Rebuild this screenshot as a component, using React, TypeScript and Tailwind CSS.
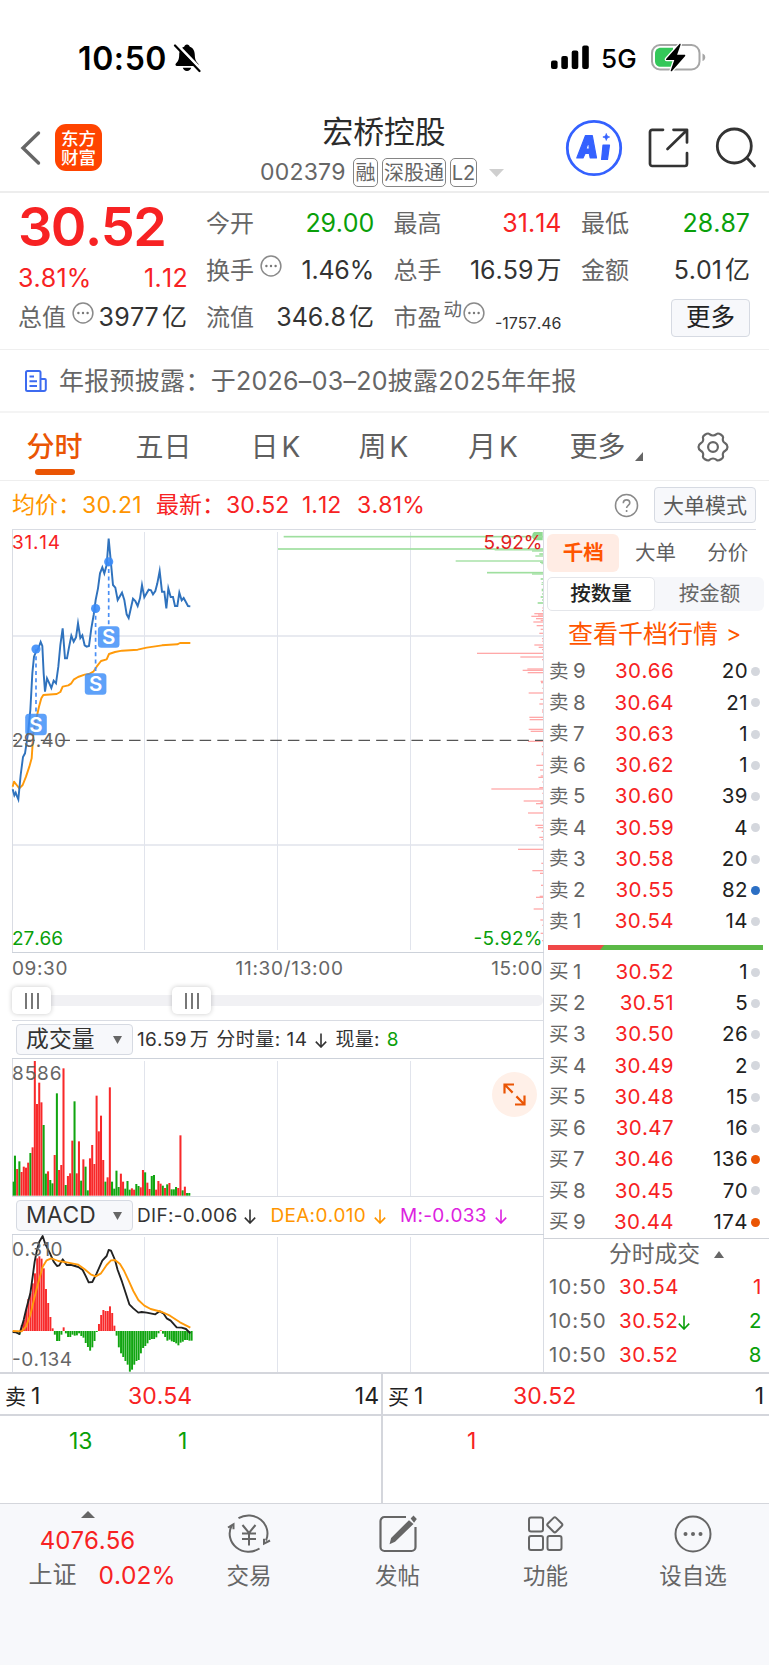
import React from 'react';

type Bar = [number, 'r' | 'g'];

const RED = '#f72223';
const GREEN = '#0a9f0a';

const priceLine =
  '38,808 43,826 47,818 50,826 55,838 62,765 69,711 75,700 84,640 91,570 97,460 102,410 108,395 115,385 122,366 127,378 131,460 135,515 141,475 147,488 154,504 161,482 168,490 175,440 181,375 188,325 195,415 201,415 207,382 214,347 221,365 228,352 234,310 241,354 247,346 254,376 260,380 267,378 274,325 281,285 287,240 294,205 300,160 307,142 313,160 320,135 326,56 333,130 339,195 346,203 353,240 366,218 373,240 380,283 386,294 399,236 406,243 413,258 420,235 426,195 433,232 446,209 453,211 459,223 466,213 472,190 479,153 486,215 493,215 499,265 505,205 512,231 519,231 525,258 532,258 538,218 545,241 551,234 558,247 564,258 571,259';
const avgLine =
  '38,800 42,785 50,795 58,805 68,795 78,770 88,740 95,715 100,640 108,600 117,560 124,535 130,525 170,522 181,516 188,500 205,496 214,490 221,479 234,471 254,464 267,462 280,455 290,440 303,423 320,418 327,402 345,396 366,392 413,389 440,383 486,376 532,373 540,369 571,369';
const difLine =
  '38,426 48,427 58,432 65,410 71,390 78,360 91,310 98,260 104,215 111,180 118,155 128,138 135,160 150,190 161,215 171,228 178,226 188,208 200,225 215,225 235,231 248,240 258,260 266,277 277,276 290,250 307,212 320,198 326,180 333,182 345,210 353,240 366,275 378,312 388,343 400,355 415,368 425,366 440,368 466,373 479,364 490,370 500,385 512,392 530,412 545,413 558,417 571,430';
const deaLine =
  '38,423 65,424 78,410 91,375 104,320 117,270 128,230 140,211 154,205 175,213 200,217 235,224 254,238 272,253 287,259 303,250 320,225 333,211 345,210 360,222 373,244 386,272 400,303 415,330 433,347 452,357 486,366 510,377 540,397 571,413';

const volume: Bar[] = [
  [755, 'g'], [677, 'g'], [717, 'r'], [694, 'g'], [726, 'r'], [710, 'r'], [713, 'r'], [698, 'r'], [669, 'g'], [652, 'r'],
  [393, 'r'], [522, 'r'], [458, 'r'], [517, 'r'], [585, 'g'], [731, 'g'], [724, 'r'], [750, 'g'], [760, 'g'], [675, 'r'],
  [490, 'g'], [720, 'r'], [705, 'r'], [415, 'r'], [765, 'g'], [738, 'r'], [730, 'r'], [632, 'r'], [514, 'g'], [730, 'r'],
  [634, 'r'], [752, 'g'], [688, 'r'], [710, 'g'], [781, 'g'], [685, 'r'], [645, 'r'], [702, 'r'], [497, 'r'], [604, 'r'],
  [557, 'r'], [690, 'r'], [755, 'g'], [742, 'r'], [472, 'r'], [755, 'g'], [776, 'g'], [722, 'g'], [771, 'g'], [731, 'r'],
  [755, 'r'], [776, 'g'], [753, 'g'], [779, 'g'], [775, 'r'], [779, 'r'], [762, 'g'], [768, 'g'], [772, 'r'], [720, 'r'],
  [727, 'g'], [758, 'r'], [777, 'r'], [738, 'g'], [735, 'g'], [779, 'r'], [753, 'r'], [761, 'r'], [767, 'g'], [774, 'r'],
  [763, 'g'], [759, 'r'], [778, 'g'], [778, 'g'], [771, 'g'], [774, 'r'], [616, 'r'], [781, 'g'], [770, 'r'], [789, 'g'],
  [789, 'g'],
];

const macd = [
  423, 423, 427, 434, 405, 390, 360, 327, 310, 280, 250, 205, 199, 206, 235, 297, 339, 381, 415, 434, 453, 453, 434, 412, 430, 441, 441,
  434, 437, 436, 430, 438, 443, 459, 471, 482, 472, 453, 426, 402, 375, 360, 363, 363, 349, 369, 407, 437, 472, 490, 501, 513, 524, 545,
  539, 524, 513, 510, 490, 474, 468, 460, 450, 447, 447, 442, 430, 421, 431, 441, 452, 449, 454, 456, 460, 466, 458, 455, 450, 450, 452,
  452,
];

const askDepth: [number, number, number][] = [
  [50, 71, 5], [87, 54, 5], [90, 704, 3], [93, 816, 4], [101, 838, 3], [104, 838, 3], [108, 826, 4], [123, 587, 4], [127, 840, 4],
  [131, 844, 3], [158, 681, 5], [162, 816, 4], [177, 842, 5], [188, 845, 3], [193, 844, 3], [210, 845, 8], [222, 846, 4], [231, 842, 5],
  [240, 846, 4], [249, 833, 5],
];
const bidDepth: [number, number][] = [
  [264, 847], [272, 846], [281, 823], [285, 834], [289, 814], [296, 828], [301, 842], [306, 820], [317, 830], [328, 842], [340, 838],
  [356, 846], [364, 847], [375, 823], [382, 836], [389, 846], [400, 651], [411, 781], [419, 846], [447, 802], [451, 788], [458, 803],
  [484, 842], [488, 843], [505, 847], [519, 806], [538, 841], [552, 838], [570, 846], [576, 846], [592, 808], [599, 809], [628, 806],
  [634, 812], [664, 804], [680, 846], [699, 845], [704, 845], [736, 829], [750, 840], [768, 842], [772, 835], [786, 847], [803, 838],
  [807, 694], [820, 847], [843, 791], [847, 842], [851, 828], [862, 840], [879, 804], [900, 847], [916, 826], [923, 833], [934, 845],
  [952, 838], [959, 844], [988, 774], [1030, 844], [1052, 817], [1060, 840], [1096, 843], [1129, 839], [1132, 828], [1150, 847],
  [1167, 821], [1200, 841], [1216, 847], [1240, 842], [1262, 846],
];

const asks: [string, string, string][] = [
  ['9', '30.66', '20'], ['8', '30.64', '21'], ['7', '30.63', '1'], ['6', '30.62', '1'], ['5', '30.60', '39'], ['4', '30.59', '4'],
  ['3', '30.58', '20'], ['2', '30.55', '82'], ['1', '30.54', '14'],
];
const bids: [string, string, string][] = [
  ['1', '30.52', '1'], ['2', '30.51', '5'], ['3', '30.50', '26'], ['4', '30.49', '2'], ['5', '30.48', '15'], ['6', '30.47', '16'],
  ['7', '30.46', '136'], ['8', '30.45', '70'], ['9', '30.44', '174'],
];

function MoreDots({ className = '' }: { className?: string }) {
  return (
    <svg className={`h-[22px] w-[22px] shrink-0 ${className}`} viewBox="0 0 22 22" fill="none">
      <circle cx="11" cy="11" r="9.9" stroke="#8a8a8a" strokeWidth="1.5" />
      <g fill="#777">
        <circle cx="6.4" cy="11" r="1.2" />
        <circle cx="11" cy="11" r="1.2" />
        <circle cx="15.6" cy="11" r="1.2" />
      </g>
    </svg>
  );
}

function StatusBar() {
  return (
    <div className="flex h-[100px] items-start text-black">
      <span className="mt-[43px] ml-[78px] w-[95px] text-[32px] leading-8 font-semibold tracking-[0.600px]">10:50</span>
      <svg className="mt-[43px] h-[30px] w-[28px]" viewBox="0 0 28 30">
        <path
          d="M14 1.5c-1.5 0-2.6 1-2.8 2.3C7.600 5 6.300 8.200 6.200 12c-.1 4.600-1.400 6.500-3.300 8.600-.9 1-.4 2.400 1 2.400h20.200c1.400 0 1.900-1.400 1-2.400-1.900-2.100-3.200-4-3.300-8.600-.1-3.800-1.400-7-5-8.200C16.600 2.500 15.500 1.500 14 1.500zM9.800 24.800h8.400c-.5 1.900-2.100 3.200-4.200 3.200s-3.700-1.300-4.200-3.200z"
          fill="#000"
        />
        <path d="M4 1.500 28 26.500" stroke="#fff" strokeWidth="3" />
        <path d="M2 2.500 26.500 28" stroke="#000" strokeWidth="2.200" strokeLinecap="round" />
      </svg>
      <svg className="mt-[45px] ml-[350px] h-[25px] w-[39px]" viewBox="0 0 39 25">
        <rect x="0" y="15.500" width="6.600" height="8.500" rx="2" />
        <rect x="10.300" y="11" width="6.600" height="13" rx="2" />
        <rect x="20.700" y="5.500" width="6.600" height="18.500" rx="2" />
        <rect x="31.200" y="0.500" width="6.600" height="23.500" rx="2" />
      </svg>
      <span className="mt-[44px] ml-[11px] w-[50px] text-[26px] leading-[30px] font-medium tracking-[0.2px]">5G</span>
      <svg className="mt-[43px] h-[29px] w-[56px]" viewBox="0 0 56 29">
        <rect x="1" y="2" width="47.500" height="24.500" rx="8" fill="none" stroke="#a6a6a6" strokeWidth="2" />
        <path d="M51.500 10.500c2 .7 2.700 2 2.700 3.700s-.7 3.100-2.700 3.800z" fill="#a6a6a6" />
        <path d="M10 4.800h12v19H10c-3.700 0-6-2.200-6-5.800v-7.400c0-3.600 2.300-5.800 6-5.800z" fill="#34c759" />
        <path
          d="M28.500 1 15.300 15.700c-.6.700-.3 1.300.5 1.300h7.500l-3.500 10.200c-.4 1 .5 1.400 1.200.7L34 13.200c.6-.7.300-1.400-.6-1.400h-7.300L29.600 1.700c.3-.9-.5-1.400-1.100-.7z"
          fill="#000" stroke="#fff" strokeWidth="2.600" paintOrder="stroke"
        />
      </svg>
    </div>
  );
}

function Tag({ children, className }: { children: React.ReactNode; className: string }) {
  return (
    <span className={`flex h-[29px] shrink-0 items-center justify-center rounded-[5px] border-[1.5px] border-[#858585] text-[20px] leading-none text-[#666] ${className}`}>
      {children}
    </span>
  );
}

function Header() {
  return (
    <div className="flex h-[93px] items-start border-b-2 border-[#ededed]">
      <svg className="mt-[30px] ml-[19px] h-[36px] w-[24px]" viewBox="0 0 24 36" fill="none">
        <path d="M19.500 3 4 18l15.500 15" stroke="#666" strokeWidth="3.400" strokeLinecap="round" />
      </svg>
      <div className="mt-[24px] ml-[12px] flex h-[47px] w-[47px] flex-col items-center justify-center rounded-[11px] bg-[#ff4400] text-[17.500px] leading-[19px] font-medium text-white">
        <span>东方</span>
        <span>财富</span>
      </div>
      <div className="ml-[158px] w-[248px]">
        <div className="mt-[16px] h-[36px] text-center text-[30.800px] leading-8 text-[#2b2b2b]">宏桥控股</div>
        <div className="mt-[6px] flex h-[29px] items-center">
          <span className="w-[93px] text-[23px] leading-none tracking-[0.200px] text-[#666]">002379</span>
          <Tag className="w-[25px]">融</Tag>
          <Tag className="ml-1 w-[64px]">深股通</Tag>
          <Tag className="ml-1 w-[27px]">L2</Tag>
          <svg className="ml-3 h-2 w-[15px] shrink-0" viewBox="0 0 15 8"><path d="M0 0h15L7.500 8z" fill="#cfcfcf" /></svg>
        </div>
      </div>
      <svg className="mt-[19px] ml-[57px] h-[58px] w-[58px]" viewBox="0 0 58 58">
        <circle cx="29" cy="29" r="26.700" fill="none" stroke="#3461ff" strokeWidth="2.800" />
        <g fill="#3461ff" stroke="#3461ff" strokeWidth="1.200" strokeLinejoin="round">
          <path fillRule="evenodd" d="M20.500 16.500h6.800l4.200 22.400h-6.300l-.9-4.400h-4.200l-2.100 4.400h-6.200zM23.600 22.500l-2.700 7.600h3.500z" />
          <path d="M38 26h6.500l-2 14.500h-5.900z" />
          <path d="M41.300 14.500c.5 2.300 1.100 2.900 3.300 3.500-2.200.6-2.800 1.200-3.300 3.400-.6-2.200-1.200-2.800-3.400-3.400 2.200-.6 2.800-1.200 3.400-3.500z" strokeWidth="0.800" />
        </g>
      </svg>
      <svg className="mt-[27px] ml-[24px] h-[42px] w-[44px]" viewBox="0 0 44 42" fill="none" stroke="#333" strokeWidth="2.700" strokeLinecap="round" strokeLinejoin="round">
        <path d="M16 2.800H5.200A2.200 2.200 0 0 0 3 5v31.800A2.200 2.200 0 0 0 5.200 39h32.600a2.200 2.200 0 0 0 2.200-2.200V26M26.500 2.800H40V15.500M39.500 3.500 20.500 22" />
      </svg>
      <svg className="mt-[26px] ml-[23px] h-[43px] w-[43px]" viewBox="0 0 43 43" fill="none" stroke="#333" strokeWidth="2.800" strokeLinecap="round">
        <circle cx="20.300" cy="20" r="17" />
        <path d="m33 32 7.500 8" />
      </svg>
    </div>
  );
}

function Quote() {
  const label = 'text-[24px] leading-none text-[#666] shrink-0';
  const value = 'text-[25px] leading-none ml-auto whitespace-nowrap';
  const cell = 'flex items-center h-[47px]';
  return (
    <div className="flex h-[157px] border-b border-[#efefef] pl-[18px]">
      <div className="mt-[6px] w-[169px] text-[#f72223]">
        <div className="h-[56px] text-[54px] leading-[56px] font-semibold tracking-[-1.500px]">30.52</div>
        <div className="mt-[8px] flex h-[30px] items-center justify-between text-[25px] leading-none tracking-[0.100px]">
          <span>3.81%</span>
          <span className="mr-[-1px] tracking-[0.300px]">1.12</span>
        </div>
        <div className="mt-[1px] flex h-[47px] items-center text-[#333]">
          <span className={label}>总值</span>
          <MoreDots className="mb-[9px] ml-[6px]" />
          <span className={value}><span className="tracking-[0.300px]">3977</span><span className="ml-[3px]">亿</span></span>
        </div>
      </div>
      <div className="mt-[7px] ml-[19px] grid h-[141px] w-[546px] grid-cols-[168px_168px_169px] gap-x-[19.500px] text-[#333]">
        <div className={cell}><span className={label}>今开</span><span className={`${value} tracking-[-0.200px] text-[#0a9f0a]`}>29.00</span></div>
        <div className={cell}><span className={label}>最高</span><span className={`${value} text-[#f72223]`}>31.14</span></div>
        <div className={cell}><span className={label}>最低</span><span className={`${value} text-[#0a9f0a]`}>28.87</span></div>
        <div className={cell}><span className={label}>换手</span><MoreDots className="mb-[9px] ml-[6px]" /><span className={`${value} tracking-[-0.200px]`}>1.46%</span></div>
        <div className={cell}><span className={label}>总手</span><span className={value}>16.59<span className="ml-[3px]">万</span></span></div>
        <div className={cell}><span className={label}>金额</span><span className={value}>5.01<span className="ml-[3px]">亿</span></span></div>
        <div className={cell}><span className={label}>流值</span><span className={value}>346.8<span className="ml-[3px]">亿</span></span></div>
        <div className={cell}>
          <span className={label}>市盈</span>
          <span className="mb-[16px] ml-[2px] text-[18.500px] leading-none text-[#666]">动</span>
          <MoreDots className="mb-[9px] ml-[1px]" />
          <span className="mt-[10px] ml-auto text-[16px] leading-none">-1757.46</span>
        </div>
        <div className="flex h-[47px] items-center justify-end">
          <span className="flex h-[38px] w-[79px] items-center justify-center rounded-[4px] border border-[#d6dae2] bg-[#f7f8fb] text-[24.500px] leading-none text-[#222]">更多</span>
        </div>
      </div>
    </div>
  );
}

function News() {
  return (
    <div className="flex h-[63px] items-center border-b-2 border-[#f4f4f4]">
      <svg className="ml-[24px] h-[24px] w-[24px]" viewBox="0 0 24 24" fill="none" stroke="#3d6bf0" strokeWidth="2">
        <path d="M16.500 22V3.500a1.500 1.500 0 0 0-1.500-1.500H3.500A1.500 1.500 0 0 0 2 3.500v17A1.500 1.500 0 0 0 3.500 22H20a1.800 1.800 0 0 0 1.800-1.800V11a1 1 0 0 0-1-1h-4.300M5.500 7.500H10M5.500 12.200h7.500M5.500 17h7.500" />
      </svg>
      <span className="mt-px ml-[11px] text-[25px] leading-none tracking-[0.280px] whitespace-nowrap text-[#666]">年报预披露：于2026–03–20披露2025年年报</span>
    </div>
  );
}

function Tabs() {
  const tab = 'flex h-[67px] items-center justify-center text-[28px] leading-none text-[#5f5f5f] whitespace-nowrap';
  return (
    <div className="grid h-[68px] grid-cols-[109px_109px_115px_103px_116px_112px_105px] border-b border-[#eee]">
      <div className="relative flex h-[67px] items-center justify-center text-[28px] leading-none font-medium text-[#ea5504]">
        分时
        <i className="absolute bottom-[5px] left-[35px] h-[6px] w-[40px] rounded-[3px] bg-[#ea5504]" />
      </div>
      <div className={tab}>五日</div>
      <div className={tab}>日<span className="ml-[3px]">K</span></div>
      <div className={`${tab} pr-[2px]`}>周<span className="ml-[3px]">K</span></div>
      <div className={`${tab} pr-[2px]`}>月<span className="ml-[3px]">K</span></div>
      <div className={tab}>
        <span className="ml-[-4px]">更多</span>
        <svg className="mt-[20px] ml-[9px] h-[9px] w-[8px]" viewBox="0 0 8 9"><path d="M8 0v9H0z" fill="#666" /></svg>
      </div>
      <div className={tab}>
        <svg className="ml-[-7px] h-[32px] w-[34px]" viewBox="0 0 34 32" fill="none" stroke="#666" strokeWidth="2.200">
          <path d="M12.200 2.500c1.100 0 1.800 2 4.800 2s3.700-2 4.800-2c1.700 0 5.300 2.100 5.300 3.800 0 1-1 2 .2 4.200 1.300 2.300 4.200 1.600 4.200 5.500s-2.900 3.200-4.200 5.500c-1.200 2.200-.2 3.200-.2 4.200 0 1.700-3.600 3.800-5.300 3.800-1.100 0-1.800-2-4.800-2s-3.700 2-4.800 2c-1.700 0-5.300-2.100-5.300-3.800 0-1 1-2-.2-4.200C5.400 19.200 2.500 19.900 2.500 16s2.900-3.200 4.200-5.500c1.200-2.200.2-3.200.2-4.200 0-1.700 3.600-3.800 5.300-3.800z" />
          <circle cx="17" cy="16" r="4.900" />
        </svg>
      </div>
    </div>
  );
}

function Summary() {
  return (
    <div className="flex h-[48px] items-center text-[23px] leading-none whitespace-nowrap">
      <span className="ml-[12px] w-[70px] text-[#ff9500]">均价：</span>
      <span className="w-[74px] tracking-[0.200px] text-[#ff9500]">30.21</span>
      <span className="w-[70px] text-[#f72223]">最新：</span>
      <span className="w-[76px] text-[#f72223]">30.52</span>
      <span className="w-[55px] text-[#f72223]">1.12</span>
      <span className="w-[257px] tracking-[0.200px] text-[#f72223]">3.81%</span>
      <svg className="h-[25px] w-[25px]" viewBox="0 0 25 25" fill="none" stroke="#8a8a8a" strokeWidth="1.600">
        <circle cx="12.500" cy="12.500" r="11" />
        <path d="M9.300 10.200c0-2 1.400-3.300 3.300-3.300s3.200 1.200 3.200 3c0 2.400-3.200 2.600-3.200 5.200M12.600 17v2" />
      </svg>
      <span className="ml-[15px] flex h-[36px] w-[102px] items-center justify-center rounded-[4px] border border-[#d6dae2] bg-[#f7f8fb] text-[21px] text-[#5a5a5a]">大单模式</span>
    </div>
  );
}

function GridLines({ y1, y2 }: { y1: number; y2: number }) {
  return (
    <g stroke="#e1e4ec">
      <path d={`M144.500 ${y1}V${y2}M277.500 ${y1}V${y2}M410.500 ${y1}V${y2}`} />
    </g>
  );
}

function Signal({ x, dot, y }: { x: number; dot: number; y: number }) {
  return (
    <g>
      <path d={`M${x} ${dot}V${y - 10}`} stroke="#4a8ff5" strokeWidth="1.700" strokeDasharray="4 3.300" />
      <circle cx={x} cy={dot} r="4.600" fill="#3b8cf8" fillOpacity=".9" />
      <rect x={x - 10.800} y={y - 10.800} width="21.600" height="21.600" rx="3.500" fill="#3b8cf8" fillOpacity=".82" />
      <text x={x} y={y + 7.200} fontSize="20.500" fontWeight="600" fill="#fff" textAnchor="middle">S</text>
    </g>
  );
}

function PriceChart() {
  return (
    <svg className="block h-[424px] w-[544px]" viewBox="0 0 544 424" fontSize="19">
      <path d="M12.500 0V424M543.500 0V424M12 .5H544" stroke="#d9dce3" fill="none" />
      <path d="M13 107H543M13 316H543" stroke="#e1e4ec" strokeWidth="1.600" />
      <GridLines y1={3} y2={421} />
      <path d="M12 423.500H544" stroke="#cdd2da" />
      <g transform="translate(260 -9) scale(.33333)">
        <path d="M822 36h26v25h-20q-10-1-12-12q1-10 6-13z" fill="#8fd991" />
        {askDepth.map(([y, x, h]) => <rect key={y} x={x} y={y - h / 2} width={849 - x} height={h} fill="#9fdf9f" />)}
        {bidDepth.map(([y, x]) => <rect key={y} x={x} y={y - 1.900} width={849 - x} height="3.800" fill="#ffa6a6" />)}
      </g>
      <path d="M13 211.400H543" stroke="#555" strokeWidth="1.400" strokeDasharray="11.500 6.150" strokeDashoffset="7.500" />
      <g transform="translate(0 -9) scale(.33333)" fill="none" strokeWidth="5.800" strokeLinejoin="miter" strokeMiterlimit="8">
        <polyline points={avgLine} stroke="#ff9a0a" strokeLinejoin="round" />
        <polyline points={priceLine} stroke="#2f72bd" />
      </g>
      <Signal x={36} dot={120} y={195.500} />
      <Signal x={95.600} dot={79.500} y={155} />
      <Signal x={108.700} dot={32.800} y={108} />
      <text x="12" y="19.800" fill={RED} textLength="48">31.14</text>
      <text x="12" y="218" fill="#666" textLength="54">29.40</text>
      <text x="12" y="416" fill={GREEN} textLength="51">27.66</text>
      <text x="542.500" y="19.800" fill="#e02020" textAnchor="end" textLength="59">5.92%</text>
      <text x="542.500" y="416" fill={GREEN} textAnchor="end" textLength="69">-5.92%</text>
    </svg>
  );
}

function Handle({ className }: { className: string }) {
  return (
    <div className={`absolute top-[4px] flex h-[27px] w-[39px] items-center justify-center gap-[4px] rounded-[5px] bg-white shadow-[0_0_5px_rgba(0,0,0,0.22)] ${className}`}>
      <i className="h-4 w-[2px] bg-[#777]" />
      <i className="h-4 w-[2px] bg-[#777]" />
      <i className="h-4 w-[2px] bg-[#777]" />
    </div>
  );
}

function Select({ children }: { children: string }) {
  return (
    <span className="ml-[4px] flex h-[31px] w-[117px] shrink-0 items-center rounded-[4px] border border-[#d6dae2] bg-[#f7f8fb] pl-[9px] text-[22.800px] leading-none tracking-[0.100px] text-[#333]">
      {children}
      <svg className="mr-[10px] ml-auto h-2 w-[9px]" viewBox="0 0 9 8"><path d="M0 0h9L4.500 8z" fill="#666" /></svg>
    </span>
  );
}

function Down() {
  return (
    <svg className="inline-block h-[15px] w-[12px]" viewBox="0 0 12 15" fill="none" stroke="currentColor" strokeWidth="1.600">
      <path d="M6 .5V14M.8 8.600 6 14l5.200-5.400" />
    </svg>
  );
}

function VolumeChart() {
  return (
    <div className="relative">
      <svg className="block h-[139px] w-[544px]" viewBox="0 0 544 139" fontSize="19">
        <path d="M12.500 0V139M543.500 0V139M12 138.500H544" stroke="#d9dce3" />
        <path d="M12 .5H544" stroke="#cdd2da" />
        <GridLines y1={3} y2={138} />
        <g transform="translate(0 -128) scale(.33333)">
          {volume.map(([y, c], i) => (
            <rect key={i} x={i ? 35.200 + 6.620 * i : 38} y={y} width={i ? 6.100 : 4} height={797 - y} fill={c === 'r' ? '#f8292a' : '#10a510'} />
          ))}
        </g>
        <text x="12" y="22" fill="#666" textLength="49.500">8586</text>
      </svg>
      <div className="absolute top-[14px] left-[492px] flex h-[45px] w-[45px] items-center justify-center rounded-full bg-[#fff0e8]">
        <svg className="h-[23px] w-[23px]" viewBox="0 0 23 23" fill="none" stroke="#ea5504" strokeWidth="2.200">
          <path d="M1.500 10.500v-9h9.500M1.800 1.800l7.800 7.800M21.500 12.500v9H12M21.200 21.200l-7.800-7.800" />
        </svg>
      </div>
    </div>
  );
}

function MacdChart() {
  return (
    <svg className="block h-[138px] w-[544px]" viewBox="0 0 544 138" fontSize="19">
      <path d="M12.500 0V138M543.500 0V138" stroke="#d9dce3" />
      <path d="M12 .5H544" stroke="#cdd2da" />
      <GridLines y1={3} y2={138} />
      <g transform="translate(0 -44) scale(.33333)" fill="none" strokeLinejoin="round">
        {macd.map((y, i) => (
          <rect key={i} x={35.800 + 6.620 * i} y={Math.min(y, 423)} width="5.800" height={Math.abs(y - 423)} fill={y < 423 ? '#f8292a' : '#10a510'} />
        ))}
        <polyline points={difLine} stroke="#222" strokeWidth="5.600" />
        <polyline points={deaLine} stroke="#ff9a0a" strokeWidth="5.600" />
      </g>
      <text x="12" y="21.500" fill="#666" textLength="50.500">0.310</text>
      <text x="12" y="131.500" fill="#666" textLength="60">-0.134</text>
    </svg>
  );
}

function Charts() {
  return (
    <div className="w-[544px]">
      <PriceChart />
      <div className="ml-[12px] flex h-[30px] items-center justify-between border-r border-[#d9dce3] text-[19px] leading-none tracking-[0.600px] text-[#666]">
        <span>09:30</span>
        <span className="ml-[20px] tracking-[0.700px]">11:30/13:00</span>
        <span>15:00</span>
      </div>
      <div className="relative ml-[12px] h-[37px] border-r border-[#d9dce3] pt-[12px]">
        <div className="h-[11px] rounded-r-[5px] bg-[#f1f1f4]" />
        <Handle className="left-0" />
        <Handle className="left-[160px]" />
      </div>
      <div className="ml-[12px] flex h-[38px] items-center border-t border-r border-[#d9dce3] text-[19px] leading-none tracking-[0.300px] whitespace-nowrap text-[#333]">
        <Select>成交量</Select>
        <span className="ml-[4px]">16.59<span className="ml-[3px]">万</span></span>
        <span className="ml-[7px] tracking-[0.500px]">分时量: 14</span>
        <span className="ml-[8px]"><Down /></span>
        <span className="ml-[8px]">现量:</span>
        <span className="ml-[7px] text-[#0a9f0a]">8</span>
      </div>
      <VolumeChart />
      <div className="ml-[12px] flex h-[37px] items-center border-r border-[#d9dce3] text-[19px] leading-none tracking-[0.300px] whitespace-nowrap text-[#333]">
        <Select>MACD</Select>
        <span className="ml-[4px]">DIF:-0.006</span>
        <span className="ml-[7px]"><Down /></span>
        <span className="ml-[14px] text-[#ff9500]">DEA:0.010</span>
        <span className="ml-[8px] text-[#ff9500]"><Down /></span>
        <span className="ml-[14px] text-[#dd22e0]">M:-0.033</span>
        <span className="ml-[8px] text-[#dd22e0]"><Down /></span>
      </div>
      <MacdChart />
    </div>
  );
}

function BookRow({ side, row }: { side: string; row: [string, string, string] }) {
  const [level, price, qty] = row;
  const dot = qty === '82' ? 'bg-[#2b6fc4]' : qty.length === 3 ? 'bg-[#ea5504]' : 'bg-[#d4d7dd]';
  return (
    <div className="flex h-[31.250px] items-center text-[20.500px] leading-none">
      <span className="flex w-[45px] items-center text-[#666]"><span className="w-[24px] text-[19.500px]">{side}</span>{level}</span>
      <span className="w-[80px] text-right tracking-[0.400px] text-[#f72223]">{price}</span>
      <span className="w-[74px] text-right tracking-[0.400px] text-[#222]">{qty}</span>
      <i className={`ml-[3px] h-[9px] w-[9px] rounded-full ${dot}`} />
    </div>
  );
}

function OrderBook() {
  const trades: [string, boolean, string, string][] = [
    ['30.54', false, '1', 'text-[#f72223]'],
    ['30.52', true, '2', 'text-[#0a9f0a]'],
    ['30.52', false, '8', 'text-[#0a9f0a]'],
  ];
  return (
    <div className="w-[225px]">
      <div className="h-px w-[212px] bg-[#d9dce3]" />
      <div className="mt-[4px] ml-[3px] grid h-[38px] w-[217px] grid-cols-3 text-[20.500px] leading-none text-[#5f5f5f]">
        <span className="flex items-center justify-center rounded-[6px] bg-[#ffece4] font-bold text-[#ff5500]">千档</span>
        <span className="flex items-center justify-center">大单</span>
        <span className="flex items-center justify-center">分价</span>
      </div>
      <div className="mt-[5px] ml-[3px] flex h-[34px] w-[217px] rounded-[6px] bg-[#f6f7fa] text-[20.500px] leading-none text-[#666]">
        <span className="flex w-[108px] items-center justify-center rounded-[5px] border border-[#e4e6ea] bg-white font-medium text-[#222]">按数量</span>
        <span className="flex w-[109px] items-center justify-center">按金额</span>
      </div>
      <div className="flex h-[45px] items-center justify-center pt-px pr-[4px] text-[25px] leading-none text-[#ff5500]">查看千档行情<span className="ml-[8px] text-[23px]">&gt;</span></div>
      <div className="pl-[5px]">{asks.map((r) => <BookRow key={r[0]} side="卖" row={r} />)}</div>
      <svg className="mt-[7.750px] ml-[4px] block h-[5px] w-[215px]" viewBox="0 0 215 5">
        <path d="M0 0h215v5H0z" fill="#5bb947" />
        <path d="M0 0h56l-4 5H0z" fill="#f04848" />
      </svg>
      <div className="mt-[6.500px] pl-[5px]">{bids.map((r) => <BookRow key={r[0]} side="买" row={r} />)}</div>
      <div className="mt-[0.250px] flex h-[32px] items-center justify-center border-t border-[#cfd2d8] text-[22.800px] leading-none text-[#666]">
        <span className="ml-[20px]">分时成交</span>
        <svg className="ml-[14px] h-[7px] w-[10px]" viewBox="0 0 10 7"><path d="M5 0l5 7H0z" fill="#666" /></svg>
      </div>
      {trades.map(([price, down, qty, color], i) => (
        <div key={i} className="flex h-[34.300px] items-center pl-[5px] text-[20.500px] leading-none tracking-[0.600px]">
          <span className="w-[70px] tracking-[1px] text-[#666]">10:50</span>
          <span className="text-[#f72223]">{price}</span>
          {down && <span className="text-[#0a9f0a]"><Down /></span>}
          <span className={`mr-[7px] ml-auto ${color}`}>{qty}</span>
        </div>
      ))}
    </div>
  );
}

function Queue() {
  return (
    <div className="h-[131px] border-t-2 border-[#d4d6dc]">
      <div className="grid h-[129px] grid-cols-[381px_388px] text-[23px] leading-none">
        <div>
          <div className="flex h-[42px] items-center border-b-2 border-[#d4d6dc] pt-[5px] pl-[5px] text-[#222]">
            <span className="w-[123px]"><span className="mr-[5px] text-[21px]">卖</span>1</span>
            <span className="text-[#f72223]">30.54</span>
            <span className="mr-[2px] ml-auto">14</span>
          </div>
          <div className="flex h-[51px] items-center text-[#0a9f0a]">
            <span className="ml-[69px] w-[109px]">13</span>
            <span>1</span>
          </div>
        </div>
        <div className="border-l-2 border-[#d4d6dc]">
          <div className="flex h-[42px] items-center border-b-2 border-[#d4d6dc] pt-[5px] pl-[5px] text-[#222]">
            <span className="w-[125px]"><span className="mr-[5px] text-[21px]">买</span>1</span>
            <span className="text-[#f72223]">30.52</span>
            <span className="mr-[5px] ml-auto">1</span>
          </div>
          <div className="flex h-[51px] items-center pl-[84px] text-[#f72223]">1</div>
        </div>
      </div>
    </div>
  );
}

function Action({ label, children }: { label: string; children: React.ReactNode }) {
  return (
    <div className="flex flex-col items-center">
      <svg className="mt-[8px] h-[44px] w-[44px]" viewBox="0 0 44 44" fill="none" stroke="#666" strokeWidth="2">{children}</svg>
      <span className="mt-[8px] text-[22.500px] leading-6 text-[#666]">{label}</span>
    </div>
  );
}

function BottomBar() {
  return (
    <div className="grid h-[162px] grid-cols-[175px_148px_149px_147px_148px] border-t border-[#d4d6dc] bg-[#f7f8fb]">
      <div className="flex flex-col items-center">
        <svg className="mt-[7px] h-[7px] w-[14px]" viewBox="0 0 14 7"><path d="M7 0l7 7H0z" fill="#666" /></svg>
        <span className="mt-[9px] text-[24px] leading-7 text-[#f72223]">4076.56</span>
        <div className="mt-[5px] ml-[29px] flex h-[30px] items-center leading-none">
          <span className="w-[70px] text-[24px] text-[#666]">上证</span>
          <span className="text-[24.500px] text-[#f72223]">0.02%</span>
        </div>
      </div>
      <Action label="交易">
        <path d="M11.500 6.200A19 18 0 0 1 39 28.500M32.500 36.500A19 18 0 0 1 4.500 14M1 15.500l5.500-3.200v5M43 28.500l-6 3.200v-5" />
        <path d="m15.500 13 6.500 8 6.500-8M15 21.500h14M15 27h14M22 21v12.500" />
      </Action>
      <Action label="发帖">
        <path d="M30 5H8.500A4 4 0 0 0 4.500 9v26a4 4 0 0 0 4 4h27a4 4 0 0 0 4-4V15" strokeWidth="2.200" />
        <path d="M33 9.500 36 12 18.500 29l-3.500 1.500 1-4zM36 6.500l1.500-1.500 2 2L38 9z" fill="#666" />
      </Action>
      <Action label="功能">
        <rect x="5" y="5.500" width="14" height="14" rx="2" />
        <rect x="5" y="24" width="14" height="14" rx="2" />
        <rect x="23.500" y="24" width="14" height="14" rx="2" />
        <rect x="25" y="7" width="11.600" height="11.600" rx="1.800" transform="rotate(45 30.800 12.800)" />
      </Action>
      <Action label="设自选">
        <circle cx="22" cy="22" r="17.500" />
        <g fill="#666" stroke="none">
          <circle cx="14.500" cy="22" r="2" />
          <circle cx="22" cy="22" r="2" />
          <circle cx="29.500" cy="22" r="2" />
        </g>
      </Action>
    </div>
  );
}

export default function App() {
  return (
    <main className="h-[1665px] w-[769px] overflow-hidden bg-white font-['Inter','Noto_Sans_CJK_SC',sans-serif] [font-kerning:none]">
      <StatusBar />
      <Header />
      <Quote />
      <News />
      <Tabs />
      <Summary />
      <div className="flex h-[843px]">
        <Charts />
        <OrderBook />
      </div>
      <Queue />
      <BottomBar />
    </main>
  );
}
